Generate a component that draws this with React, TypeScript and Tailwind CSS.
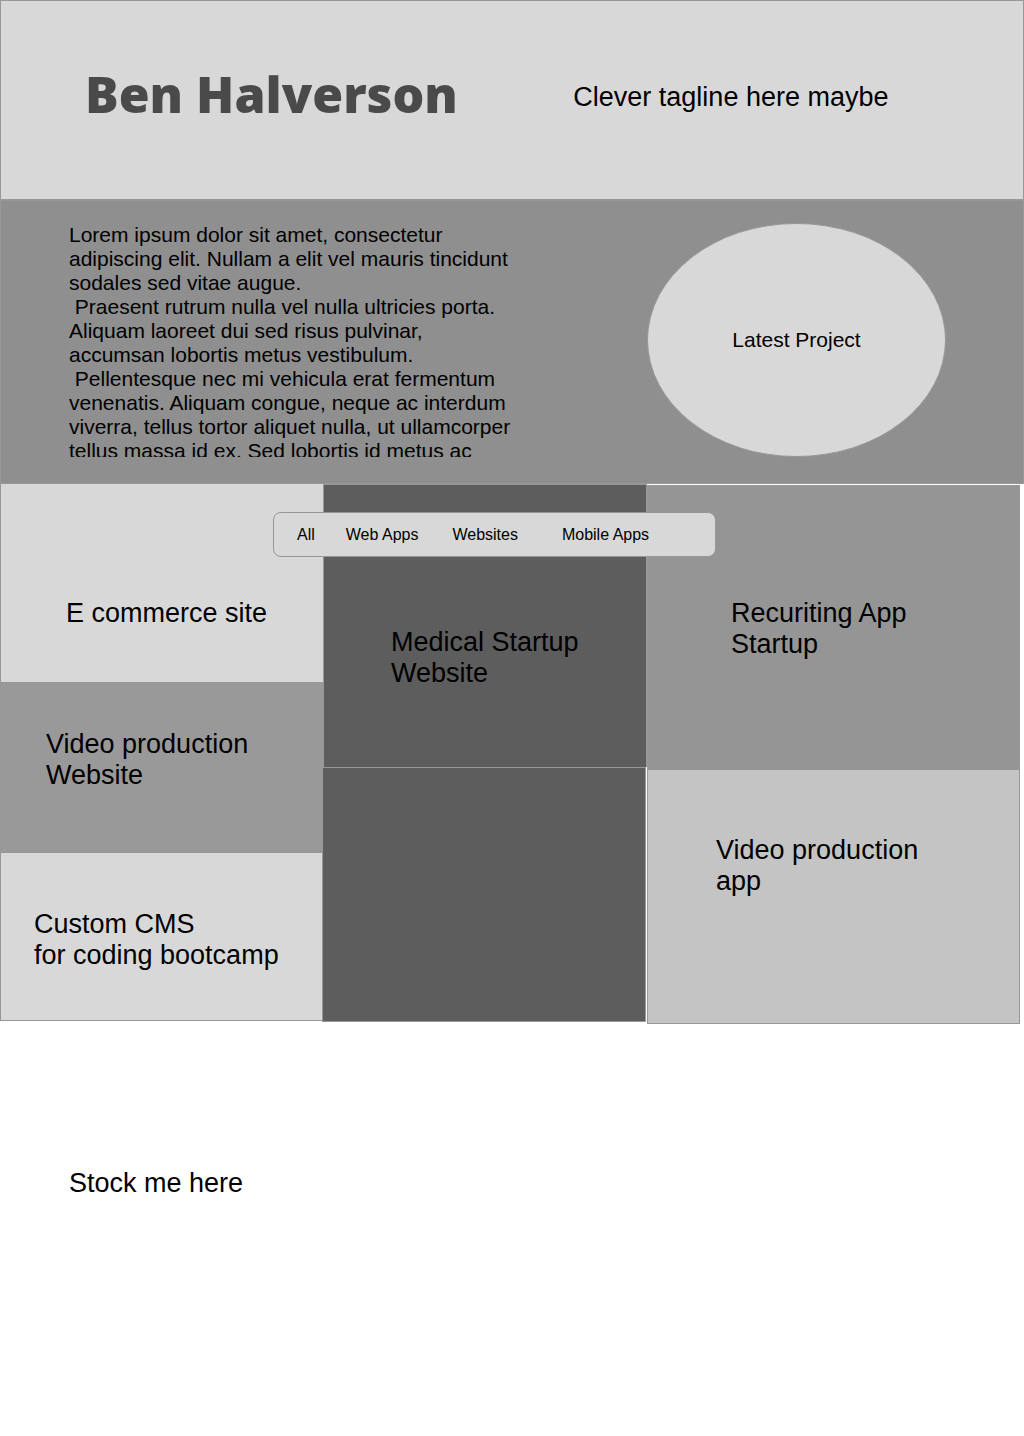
function Tile({ title, className }: { title?: string[]; className: string }) {
  return (
    <article className={`border border-[#979797] ${className}`}>
      {title && (
        <h2 className="text-[27px] leading-[31px]">
          {title.map((line) => (
            <span key={line} className="block whitespace-nowrap">
              {line}
            </span>
          ))}
        </h2>
      )}
    </article>
  );
}

function FilterBar() {
  return (
    <nav
      aria-label="Project filters"
      className="absolute left-[273px] top-7 flex h-[45px] w-[443px] items-center rounded-lg border border-[#979797] bg-[#d8d8d8] pl-[23px] text-base leading-[18px]"
    >
      <button type="button" className="mr-[31px]">All</button>
      <button type="button" className="mr-[34px]">Web Apps</button>
      <button type="button" className="mr-11">Websites</button>
      <button type="button">Mobile Apps</button>
    </nav>
  );
}

export default function App() {
  return (
    <div className="min-h-screen bg-white font-['Liberation_Sans',Arial,sans-serif] text-black">
      <header className="grid min-h-[200px] grid-cols-[56%_44%] border border-[#979797] bg-[#d8d8d8]">
        <h1 className="pl-[84px] pt-[61px] font-['Open_Sans',sans-serif] text-[50px] font-extrabold leading-[64px] text-[#4a4a4a]">
          Ben Halverson
        </h1>
        <p className="pt-[81px] text-[27px] leading-[31px]">Clever tagline here maybe</p>
      </header>

      <section className="flex items-start justify-between border border-[#979797] bg-[#8f8f8f] pb-[26px] pl-[68px] pr-[77px] pt-[22px]">
        <p className="h-[234px] w-[450px] overflow-hidden whitespace-pre text-[21px] leading-[24px]">
          {`Lorem ipsum dolor sit amet, consectetur
adipiscing elit. Nullam a elit vel mauris tincidunt
sodales sed vitae augue.
 Praesent rutrum nulla vel nulla ultricies porta.
Aliquam laoreet dui sed risus pulvinar,
accumsan lobortis metus vestibulum.
 Pellentesque nec mi vehicula erat fermentum
venenatis. Aliquam congue, neque ac interdum
viverra, tellus tortor aliquet nulla, ut ullamcorper
tellus massa id ex. Sed lobortis id metus ac`}
        </p>
        <a
          href="#latest"
          className="flex h-[234px] w-[299px] items-center justify-center rounded-[50%] border border-[#979797] bg-[#d8d8d8] text-[21px] leading-[24px]"
        >
          Latest Project
        </a>
      </section>

      <main className="relative grid grid-cols-[323fr_324fr_373fr] items-start pr-1">
        <div className="flex flex-col">
          <Tile title={["E commerce site"]} className="h-[199px] border-t-0 border-r-0 bg-[#d8d8d8] pl-[65px] pt-[114px]" />
          <Tile title={["Video production", "Website"]} className="h-[170px] border-t-0 border-r-0 bg-[#999999] pl-[45px] pt-[46px]" />
          <Tile
            title={["Custom CMS", "for coding bootcamp"]}
            className="h-[168px] border-t-0 border-r-0 bg-[#d8d8d8] pl-[33px] pt-[56px]"
          />
        </div>
        <div className="flex flex-col">
          <Tile title={["Medical Startup", "Website"]} className="h-[283px] border-b-0 bg-[#5d5d5d] pl-[67px] pt-[142px]" />
          <Tile className="-ml-px mr-px h-[255px] bg-[#5d5d5d]" />
        </div>
        <div className="flex flex-col pt-px">
          <Tile title={["Recuriting App", "Startup"]} className="h-[284px] border-b-0 bg-[#959595] pl-[83px] pt-[112px]" />
          <Tile title={["Video production", "app"]} className="h-[255px] bg-[#c4c4c4] pl-[68px] pt-[65px]" />
        </div>
        <FilterBar />
      </main>

      <footer className="pl-[69px] pt-[144px]">
        <p className="text-[27px] leading-[31px]">Stock me here</p>
      </footer>
    </div>
  );
}
